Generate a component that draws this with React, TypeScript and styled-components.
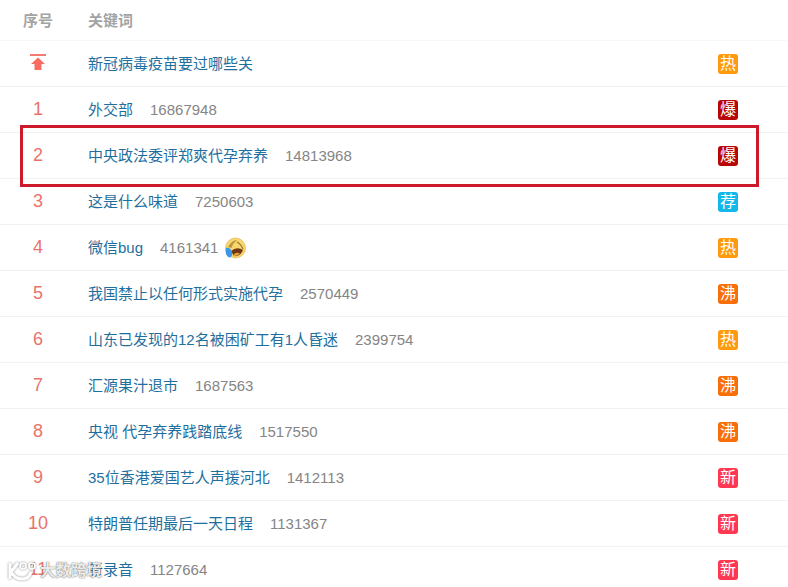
import React from "react";
import styled, { createGlobalStyle } from "styled-components";

const Global = createGlobalStyle`
  html, body { margin: 0; padding: 0; background: #fff; }
  body { width: 788px; height: 587px; overflow: hidden; font-family: "Liberation Sans", "Noto Sans CJK SC", sans-serif; }
`;

const Page = styled.div`
  position: relative;
  width: 788px;
  height: 587px;
  overflow: hidden;
`;

const Row = styled.div`
  display: grid;
  grid-template-columns: 76px 642px 20px;
  align-items: center;
  height: 45px;
  border-bottom: 1px solid #f2f2f2;
`;

const HeaderRow = styled(Row)`
  height: 40px;
  border-bottom-color: #f8f8f8;
`;

const HeadCell = styled.div<{ $center?: boolean }>`
  font-size: 15px;
  line-height: 20px;
  font-weight: 700;
  color: #a3a3a3;
  text-align: ${(p) => (p.$center ? "center" : "left")};
  padding-left: ${(p) => (p.$center ? 0 : 12)}px;
  margin-top: 1px;
`;

const Rank = styled.div`
  font-size: 18px;
  line-height: 22px;
  color: #e9736b;
  text-align: center;
  margin-top: -1px;
`;

const Keyword = styled.div`
  display: flex;
  align-items: center;
  height: 22px;
  padding-left: 12px;
  font-size: 15px;
  line-height: 20px;
  white-space: nowrap;
  margin-top: 0;
`;

const Title = styled.a`
  color: #1f6f9e;
`;

const Count = styled.span`
  color: #858585;
  margin-left: 17px;
`;

const Emoji = styled.svg`
  width: 22px;
  height: 22px;
  margin-left: 6px;
  flex: none;
`;

const Badge = styled.span<{ $bg: string }>`
  display: flex;
  align-items: center;
  justify-content: center;
  width: 20px;
  height: 20px;
  border-radius: 3px;
  background: ${(p) => p.$bg};
  color: #fff;
  font-size: 16px;
  line-height: 20px;
`;

const Highlight = styled.div`
  position: absolute;
  left: 20px;
  top: 125px;
  width: 733px;
  height: 56px;
  border: 3px solid #cc1a2a;
  pointer-events: none;
`;

const Watermark = styled.div`
  position: absolute;
  left: 8px;
  top: 561px;
  display: flex;
  align-items: center;
  gap: 2px;
  color: rgba(255, 255, 255, 0.9);
  font-size: 15.5px;
  line-height: 20px;
  font-weight: 700;
  text-shadow: 0 0 1px rgba(70, 70, 70, 0.85), 0 0 2px rgba(90, 90, 90, 0.5);
  pointer-events: none;
`;

const WatermarkLogo = styled.svg`
  width: 30px;
  height: 20px;
  filter: drop-shadow(0 0 1px rgba(90, 90, 90, 0.7));
`;

const TopIcon = styled.svg`
  display: block;
  margin: -3px auto 0;
  width: 16px;
  height: 16px;
`;

const colors = { 热: "#ff9a0e", 爆: "#b80606", 荐: "#13b8e9", 沸: "#f86e09", 新: "#ff3852" };

type BadgeText = keyof typeof colors;
type Item = { rank: string; title: string; count?: string; badge: BadgeText; emoji?: boolean };

const items: Item[] = [
  { rank: "top", title: "新冠病毒疫苗要过哪些关", badge: "热" },
  { rank: "1", title: "外交部", count: "16867948", badge: "爆" },
  { rank: "2", title: "中央政法委评郑爽代孕弃养", count: "14813968", badge: "爆" },
  { rank: "3", title: "这是什么味道", count: "7250603", badge: "荐" },
  { rank: "4", title: "微信bug", count: "4161341", badge: "热", emoji: true },
  { rank: "5", title: "我国禁止以任何形式实施代孕", count: "2570449", badge: "沸" },
  { rank: "6", title: "山东已发现的12名被困矿工有1人昏迷", count: "2399754", badge: "热" },
  { rank: "7", title: "汇源果汁退市", count: "1687563", badge: "沸" },
  { rank: "8", title: "央视 代孕弃养践踏底线", count: "1517550", badge: "沸" },
  { rank: "9", title: "35位香港爱国艺人声援河北", count: "1412113", badge: "新" },
  { rank: "10", title: "特朗普任期最后一天日程", count: "1131367", badge: "新" },
  { rank: "11", title: "新录音", count: "1127664", badge: "新" },
];

export default function App() {
  return (
    <Page>
      <Global />
      <HeaderRow>
        <HeadCell $center>序号</HeadCell>
        <HeadCell>关键词</HeadCell>
        <span />
      </HeaderRow>
      {items.map((it) => (
        <Row key={it.rank}>
          <Rank>
            {it.rank === "top" ? (
              <TopIcon viewBox="0 0 16 16">
                <rect x="0" y="0" width="16" height="2" fill="#f27c72" />
                <path d="M8 3.5 L15 10 H11.5 V16 H4.5 V10 H1 Z" fill="#f86c62" />
              </TopIcon>
            ) : (
              it.rank
            )}
          </Rank>
          <Keyword>
            <Title>{it.title}</Title>
            {it.count && <Count>{it.count}</Count>}
            {it.emoji && (
              <Emoji viewBox="0 0 22 22">
                <circle cx="11.5" cy="11" r="10" fill="#f9d66e" stroke="#d9ae48" strokeWidth="0.6" />
                <path d="M4 10 Q8 3 13 3 Q9 6 7.5 11 Z" fill="#a5832f" opacity="0.75" />
                <path d="M13 5 Q17 7 19 12" stroke="#9a7a28" strokeWidth="1.3" fill="none" />
                <path d="M7 14 Q13 9 19 13 Q16 20 10 19 Z" fill="#6e3612" />
                <path d="M10 17 Q13 15 16 16.5 Q13 19.5 10 19 Z" fill="#e0a040" />
                <path d="M2 11 Q0.5 18 5 20.5 Q9 20 8 15 Q6 10 2 11 Z" fill="#3b97ea" />
              </Emoji>
            )}
          </Keyword>
          <Badge $bg={colors[it.badge]}>{it.badge}</Badge>
        </Row>
      ))}
      <Highlight />
      <Watermark>
        <WatermarkLogo viewBox="0 0 30 20">
          <path d="M2 2 V18 M3 11 L10 2 M3 11 Q7 18 14 18 Q21 18 23 11" stroke="#fff" strokeWidth="3" fill="none" />
          <circle cx="15" cy="5" r="3" stroke="#fff" strokeWidth="1.6" fill="none" />
          <circle cx="24" cy="5" r="3" stroke="#fff" strokeWidth="1.6" fill="none" />
        </WatermarkLogo>
        大数跨境
      </Watermark>
    </Page>
  );
}
